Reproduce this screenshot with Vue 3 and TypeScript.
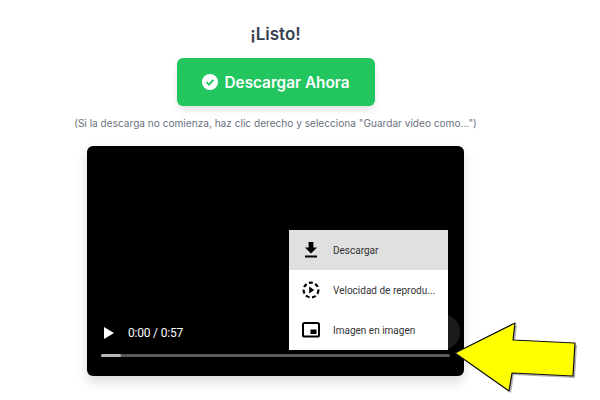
<script setup lang="ts">
interface MenuItem { label: string; icon: string; active?: boolean }
const items: MenuItem[] = [
  { label: 'Descargar', icon: 'download', active: true },
  { label: 'Velocidad de reprodu...', icon: 'speed' },
  { label: 'Imagen en imagen', icon: 'pip' },
]
</script>

<template>
  <main class="page">
    <h2 class="title">¡Listo!</h2>
    <a class="cta">
      <svg class="check" viewBox="0 0 16 16" width="16" height="16">
        <circle cx="8" cy="8" r="8" fill="#fff" />
        <path d="M4.6 8.2l2.4 2.4 4.4-4.8" fill="none" stroke="#22c55e" stroke-width="1.9" />
      </svg>
      <span>Descargar Ahora</span>
    </a>
    <p class="note">(Si la descarga no comienza, haz clic derecho y selecciona "Guardar vídeo como...")</p>
    <section class="video">
      <div class="controls">
        <div class="row">
          <svg class="play" viewBox="0 0 10 12" width="10" height="12"><path d="M0 0l10 6-10 6z" fill="#fff" /></svg>
          <span class="time">0:00 / 0:57</span>
        </div>
        <div class="track"><div class="fill"></div></div>
      </div>
      <div class="more"></div>
      <ul class="menu">
        <li v-for="item in items" :key="item.label" class="item" :class="{ active: item.active }">
          <svg class="icon" viewBox="0 0 24 24" width="24" height="24">
            <path v-if="item.icon === 'download'" d="M18 9.5h-3.6V4H9.6v5.500H6l6 6 6-6zM6 17.500v2h12v-2H6z" fill="#000" />
            <g v-else-if="item.icon === 'speed'">
              <circle cx="12" cy="12" r="7.400" fill="none" stroke="#000" stroke-width="2.200" stroke-dasharray="4 2.500" />
              <path d="M10.200 8.600l5 3.400-5 3.400z" fill="#000" />
            </g>
            <g v-else>
              <rect x="4" y="5" width="16" height="13.500" rx="1.600" fill="none" stroke="#000" stroke-width="2" />
              <rect x="11.500" y="11.500" width="6" height="4.500" fill="#000" />
            </g>
          </svg>
          <span class="label">{{ item.label }}</span>
        </li>
      </ul>
    </section>
    <svg class="arrow" viewBox="0 0 140 90" width="140" height="90">
      <path d="M5 33L65 3l-2 17 62 3-2 33-61-3-3 18z" fill="#000" opacity=".3" transform="translate(2 2)" />
      <path d="M5 33L65 3l-2 17 62 3-2 33-61-3-3 18z" fill="#ffff00" stroke="#111" stroke-width="1.200" stroke-linejoin="round" />
    </svg>
  </main>
</template>

<style scoped>
.page {
  position: relative;
  width: 551px;
  height: 400px;
  display: flex;
  flex-direction: column;
  align-items: center;
  overflow: visible;
  font-family: Inter, "Liberation Sans", sans-serif;
}
.title {
  margin: 24px 0 0;
  font-size: 17px;
  line-height: 21px;
  font-weight: 600;
  color: #374151;
}
.cta {
  margin-top: 13px;
  width: 198px;
  height: 48px;
  display: flex;
  align-items: center;
  justify-content: center;
  gap: 7px;
  border-radius: 6px;
  background: #22c55e;
  color: #fff;
  font-size: 15.300px;
  font-weight: 600;
  box-shadow: 0 4px 6px rgba(0, 0, 0, 0.1);
}
.note {
  margin: 10px 0 0;
  font-size: 10.100px;
  line-height: 14px;
  color: #6b7280;
  white-space: nowrap;
}
.video {
  position: relative;
  margin-top: 16px;
  width: 377px;
  height: 230px;
  flex: none;
  border-radius: 6px;
  background: #000;
  box-shadow: 0 6px 12px rgba(0, 0, 0, 0.14);
  display: flex;
  flex-direction: column;
  justify-content: flex-end;
}
.controls {
  padding: 0 14px 19px;
  display: flex;
  flex-direction: column;
  gap: 13px;
}
.row {
  display: flex;
  align-items: center;
  gap: 14px;
  padding-left: 3px;
}
.time {
  font-family: Roboto, "Liberation Sans", sans-serif;
  font-size: 12px;
  line-height: 16px;
  letter-spacing: -0.200px;
  color: #fff;
}
.track {
  height: 3px;
  border-radius: 2px;
  background: #5a5a5a;
}
.fill {
  width: 20px;
  height: 100%;
  border-radius: 2px;
  background: #b8b8b8;
}
.more {
  position: absolute;
  right: 4px;
  bottom: 26px;
  width: 36px;
  height: 36px;
  border-radius: 50%;
  background: #1c1c1c;
}
.menu {
  position: absolute;
  left: 202px;
  top: 84px;
  width: 159px;
  margin: 0;
  padding: 0;
  list-style: none;
  background: #fff;
  font-family: Roboto, "Liberation Sans", sans-serif;
}
.item {
  height: 40px;
  display: flex;
  align-items: center;
  gap: 10px;
  padding-left: 10px;
}
.item.active {
  background: #e0e0e0;
}
.icon {
  flex: none;
}
.label {
  font-size: 10px;
  color: #333;
  white-space: nowrap;
}
.arrow {
  position: absolute;
  left: 450px;
  top: 320px;
}
</style>
